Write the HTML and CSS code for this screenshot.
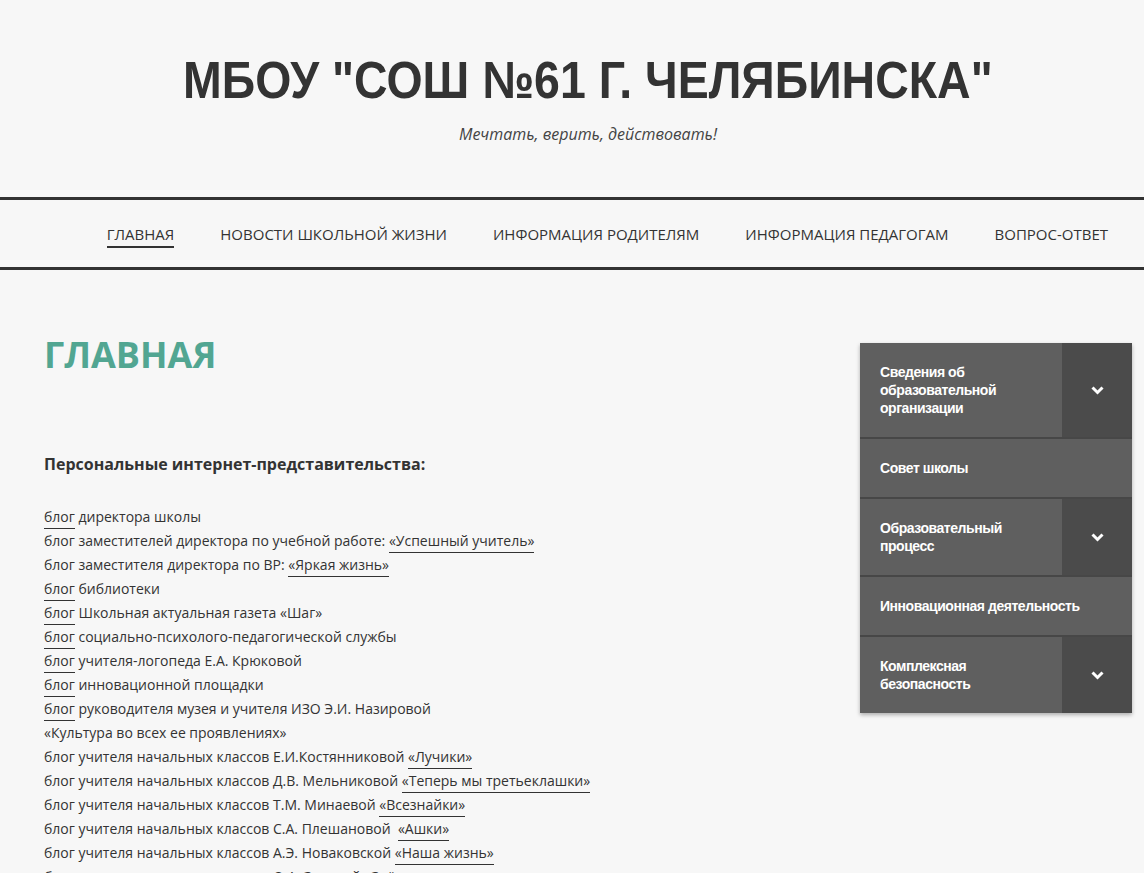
FILE: index.html
```html
<!DOCTYPE html>
<html lang="ru">
<head>
<meta charset="utf-8">
<title>МБОУ "СОШ №61 г. Челябинска"</title>
<link rel="stylesheet" href="styles.css">
</head>
<body>
<header class="site-header">
  <h1 class="site-title"><span class="site-title-text">МБОУ "СОШ №61 г. Челябинска"</span></h1>
  <p class="site-tagline">Мечтать, верить, действовать!</p>
</header>
<nav class="main-nav">
  <a class="nav-item active" href="#">Главная</a>
  <a class="nav-item" href="#">Новости школьной жизни</a>
  <a class="nav-item" href="#">Информация родителям</a>
  <a class="nav-item" href="#">Информация педагогам</a>
  <a class="nav-item" href="#">Вопрос-ответ</a>
</nav>
<div class="page">
  <main class="content">
    <h2 class="page-title">Главная</h2>
    <h3 class="section-title">Персональные интернет-представительства:</h3>
    <div class="blog-list">
      <p><a href="#">блог</a> директора школы</p>
      <p>блог заместителей директора по учебной работе: <a href="#">«Успешный учитель»</a></p>
      <p>блог заместителя директора по ВР: <a href="#">«Яркая жизнь» </a></p>
      <p><a href="#">блог</a> библиотеки</p>
      <p><a href="#">блог</a> Школьная актуальная газета «Шаг»</p>
      <p><a href="#">блог</a> социально-психолого-педагогической службы</p>
      <p><a href="#">блог</a> учителя-логопеда Е.А. Крюковой</p>
      <p><a href="#">блог</a> инновационной площадки</p>
      <p><a href="#">блог</a> руководителя музея и учителя ИЗО Э.И. Назировой</p>
      <p>«Культура во всех ее проявлениях»</p>
      <p>блог учителя начальных классов Е.И.Костянниковой <a href="#">«Лучики»</a></p>
      <p>блог учителя начальных классов Д.В. Мельниковой <a href="#">«Теперь мы третьеклашки»</a></p>
      <p>блог учителя начальных классов Т.М. Минаевой <a href="#">«Всезнайки» </a></p>
      <p>блог учителя начальных классов С.А. Плешановой &nbsp;<a href="#">«Ашки» </a></p>
      <p>блог учителя начальных классов А.Э. Новаковской <a href="#">«Наша жизнь»</a></p>
      <p>блог учителя начальных классов О.А. Зотовой «Звёздочки»</p>
    </div>
  </main>
  <aside class="sidebar">
    <ul class="side-menu">
      <li class="side-item has-sub"><a href="#">Сведения об образовательной организации</a><span class="toggle"><svg width="13" height="9" viewBox="0 0 13 9"><path d="M1.5 1.5 L6.5 6.5 L11.5 1.5" fill="none" stroke="#fff" stroke-width="3"/></svg></span></li>
      <li class="side-item"><a href="#">Совет школы</a></li>
      <li class="side-item has-sub"><a href="#">Образовательный процесс</a><span class="toggle"><svg width="13" height="9" viewBox="0 0 13 9"><path d="M1.5 1.5 L6.5 6.5 L11.5 1.5" fill="none" stroke="#fff" stroke-width="3"/></svg></span></li>
      <li class="side-item"><a href="#">Инновационная деятельность</a></li>
      <li class="side-item has-sub"><a href="#">Комплексная безопасность</a><span class="toggle"><svg width="13" height="9" viewBox="0 0 13 9"><path d="M1.5 1.5 L6.5 6.5 L11.5 1.5" fill="none" stroke="#fff" stroke-width="3"/></svg></span></li>
    </ul>
  </aside>
</div>
</body>
</html>
```
FILE: styles.css
```css
html, body {
  margin: 0;
  padding: 0;
  background: #f7f7f7;
  color: #333;
  font-family: "Open Sans", "Liberation Sans", sans-serif;
}

.site-header {
  padding: 52px 0 0 32px;
  height: 145px;
  text-align: center;
}

.site-title {
  margin: 0;
  font-family: "Liberation Sans Narrow", "Liberation Sans", Arial, sans-serif;
  font-weight: bold;
  font-size: 52px;
  line-height: 56px;
  text-transform: uppercase;
  color: #333;
  white-space: nowrap;
}

.site-title-text {
  display: inline-block;
  transform: scaleX(0.894);
  transform-origin: center;
}

.site-tagline {
  margin: 14px 0 0;
  font-family: "Open Sans", sans-serif;
  font-style: italic;
  font-size: 16px;
  line-height: 24px;
  color: #444;
}

.main-nav {
  border-top: 3px solid #333;
  border-bottom: 3px solid #333;
  height: 67px;
  display: flex;
  align-items: center;
  justify-content: flex-end;
  gap: 46px;
  padding-right: 36px;
}

.nav-item {
  font-size: 15px;
  line-height: 22px;
  text-transform: uppercase;
  color: #333;
  text-decoration: none;
  margin-top: 4px;
  padding-bottom: 1px;
  border-bottom: 2px solid transparent;
}

.nav-item.active {
  border-bottom-color: #333;
}

.page {
  display: flex;
  justify-content: space-between;
  padding: 0 12px 0 44px;
}

.content {
  flex: 1;
  padding-top: 60px;
}

.page-title {
  margin: 0;
  font-size: 36px;
  line-height: 50px;
  font-weight: bold;
  text-transform: uppercase;
  color: #52a692;
}

.section-title {
  margin: 72px 0 0;
  font-size: 16px;
  font-weight: bold;
  line-height: 24px;
  color: #333;
}

.blog-list {
  margin-top: 29px;
}

.blog-list p {
  margin: 0;
  font-size: 14px;
  line-height: 24px;
  white-space: nowrap;
}

.blog-list a {
  color: #333;
  text-decoration: none;
  border-bottom: 1px solid #333;
  padding-bottom: 2px;
}

.sidebar {
  width: 272px;
  padding-top: 73px;
}

.side-menu {
  list-style: none;
  margin: 0;
  padding: 0;
  background: #5f5f5f;
  box-shadow: 0 2px 4px rgba(0,0,0,0.3);
}

.side-item {
  display: flex;
  border-bottom: 2px solid #474747;
  background: #5f5f5f;
}

.side-item:last-child {
  border-bottom: none;
}

.side-item a {
  flex: 1;
  display: block;
  padding: 20px;
  font-family: "Liberation Sans", Arial, sans-serif;
  font-size: 14px;
  line-height: 18px;
  font-weight: bold;
  color: #fff;
  text-decoration: none;
  letter-spacing: -0.45px;
}

.side-item.has-sub a {
  padding-right: 40px;
}

.toggle {
  width: 70px;
  flex: none;
  background: #4b4b4b;
  display: flex;
  align-items: center;
  justify-content: center;
}
```
